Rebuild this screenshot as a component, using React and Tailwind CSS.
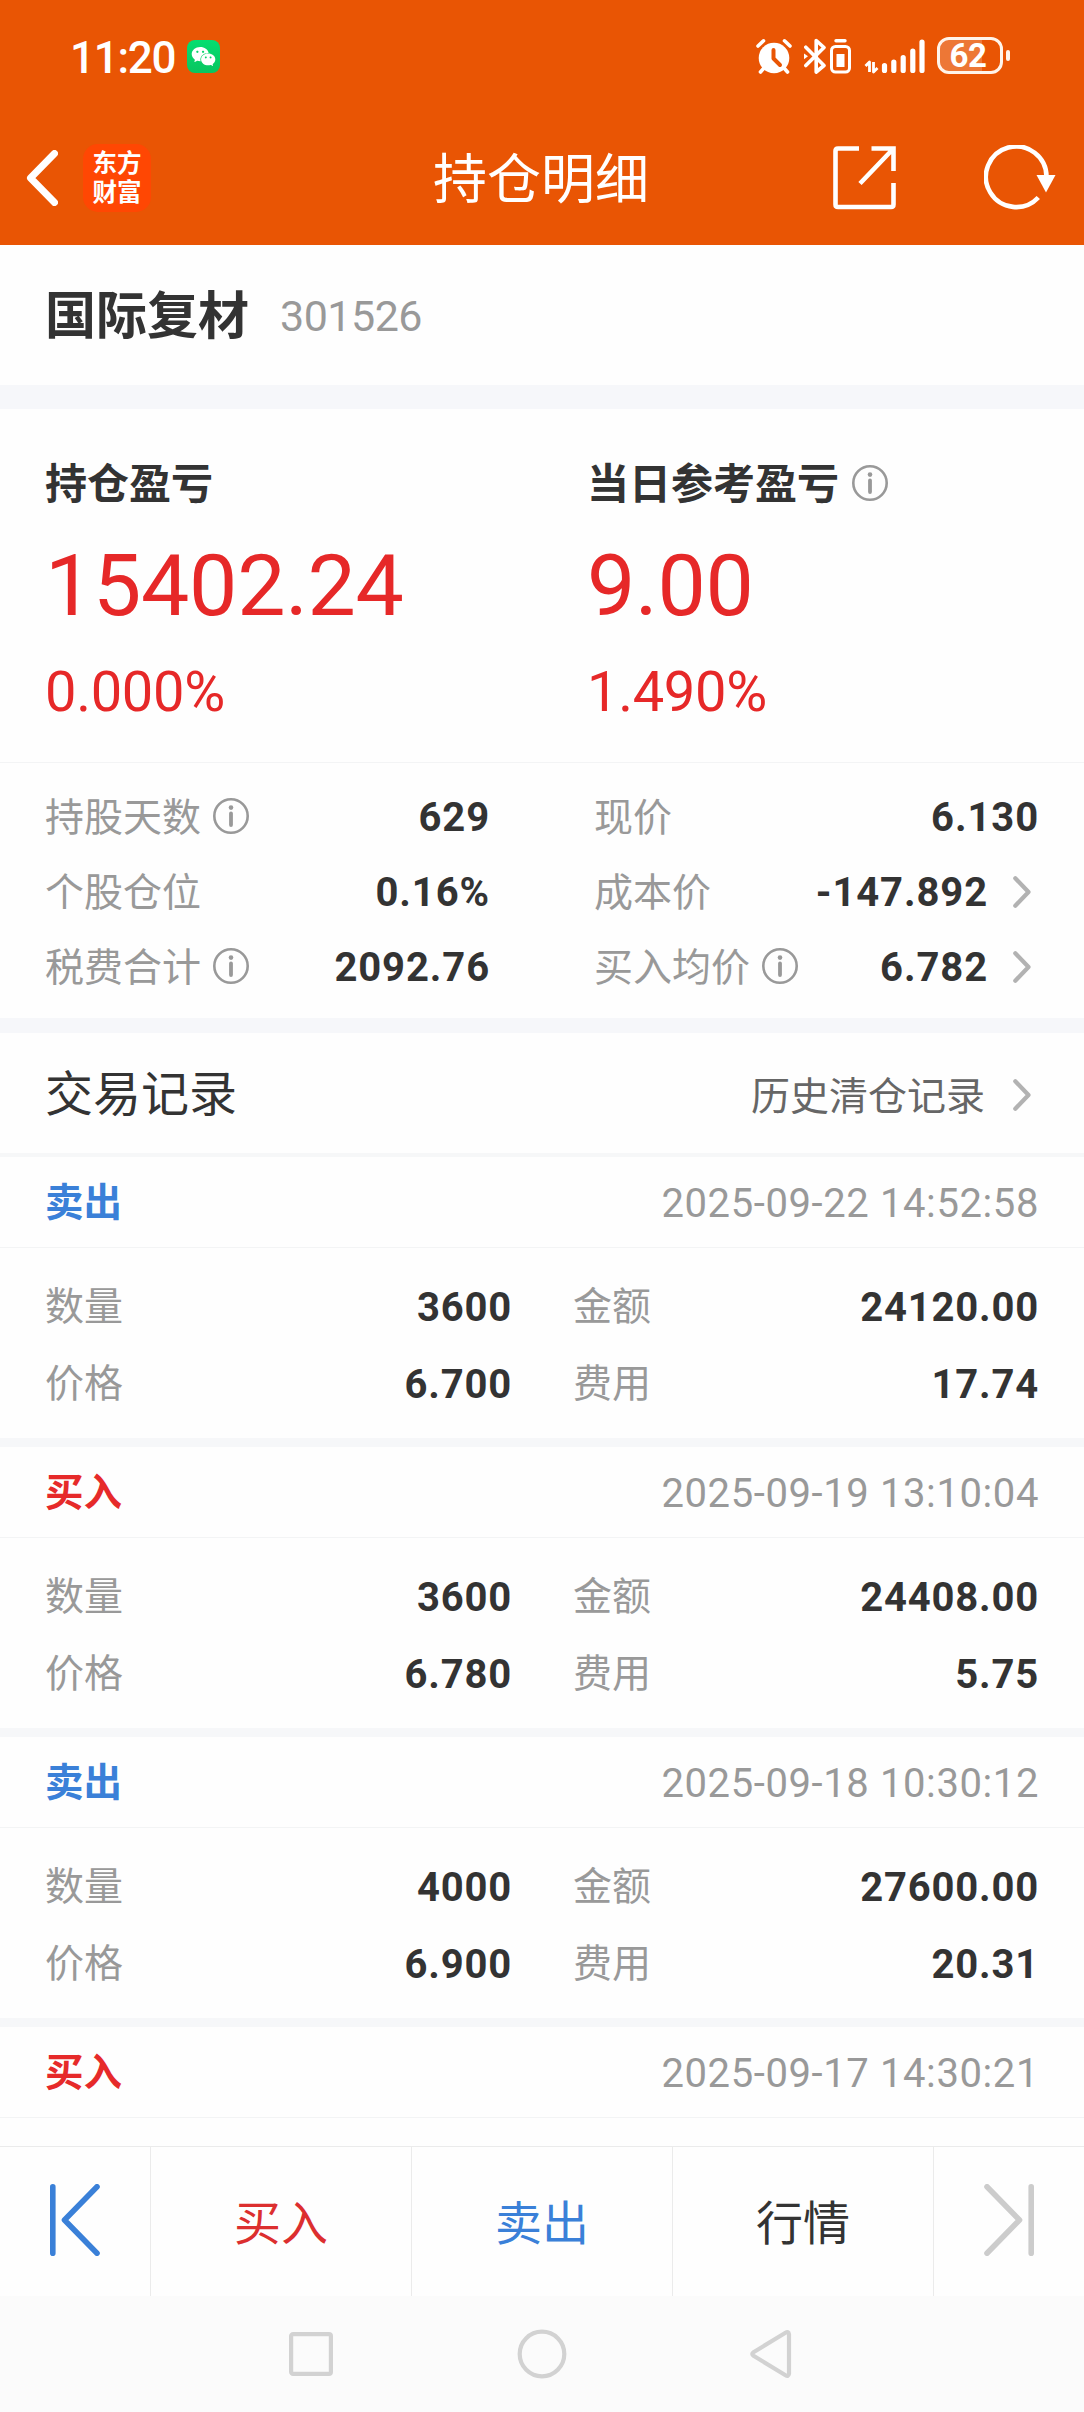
import { AiFillWechat } from 'react-icons/ai';

const records = [
   { type: 'sell', time: '2025-09-22 14:52:58', count: '3600', amount: '24120.00', price: '6.700', fee: '17.74' },
   { type: 'buy', time: '2025-09-19 13:10:04', count: '3600', amount: '24408.00', price: '6.780', fee: '5.75' },
   { type: 'sell', time: '2025-09-18 10:30:12', count: '4000', amount: '27600.00', price: '6.900', fee: '20.31' },
   { type: 'buy', time: '2025-09-17 14:30:21' },
];

function InfoIcon() {
   return (
      <svg width="36" height="36" viewBox="0 0 36 36" fill="none" className="shrink-0">
         <circle cx="18" cy="18" r="16.7" stroke="#999" strokeWidth="2.6" />
         <circle cx="18" cy="9.6" r="2.3" fill="#999" />
         <path d="M18 15.5V27" stroke="#999" strokeWidth="3.8" strokeLinecap="round" />
      </svg>
   );
}

function ArrowIcon() {
   return (
      <svg width="18" height="32" viewBox="0 0 18 32" fill="none" className="shrink-0">
         <path d="M2.3 2.3L15.5 16L2.3 29.7" stroke="#b2b2b2" strokeWidth="4.2" strokeLinecap="round" strokeLinejoin="round" />
      </svg>
   );
}

function StatusBar() {
   return (
      <div className="flex h-[112px] items-center pl-[70px] pr-[74px]">
         <span className="pt-[3px] text-[44px] font-medium leading-none tracking-[-1.3px]">11:20</span>
         <span className="ml-3 flex h-[33px] w-[33px] items-center justify-center rounded-[8px] bg-gradient-to-b from-[#05de71] to-[#09c55f]">
            <AiFillWechat size={27} />
         </span>

         <div className="ml-auto flex items-center">
            <svg width="36" height="36" viewBox="0 0 36 36" fill="none">
               <circle cx="18" cy="20" r="15.3" fill="#fff" />
               <path d="M2 8L7.5 2.8M34 8L28.5 2.8M4.5 34L8 30M31.5 34L28 30" stroke="#fff" strokeWidth="3.6" strokeLinecap="round" />
               <path d="M17.5 12V20.5L24 27" stroke="#e95504" strokeWidth="4" strokeLinecap="round" strokeLinejoin="round" />
            </svg>
            <svg width="22" height="36" viewBox="0 0 22 36" fill="none" className="ml-3">
               <path d="M1.8 9.2L20 27.5L12.2 34V2.5L20 9.5L1.8 27.5" stroke="#fff" strokeWidth="3.6" strokeLinecap="round" strokeLinejoin="round" />
               <path d="M0 15.5L4 18.3L0 21.3Z" fill="#fff" />
            </svg>
            <svg width="21" height="36" viewBox="0 0 21 36" fill="none" className="ml-1">
               <path d="M6 2.8H15" stroke="#fff" strokeWidth="3.4" strokeLinecap="round" />
               <rect x="1.5" y="8.5" width="18" height="25.5" rx="4" stroke="#fff" strokeWidth="3" />
               <rect x="6.5" y="16" width="8" height="13" fill="#fff" />
            </svg>
            <svg width="62" height="36" viewBox="0 0 62 36" fill="none" className="ml-[13px]">
               <path d="M1.5 28L5.5 24V34M9.5 24V34L13.5 30" stroke="#fff" strokeWidth="2.8" strokeLinejoin="round" />
               <path d="M20.5 27.5V32.5M29.8 24V32.5M39.2 19.5V32.5M48.8 13V32.5M58 4V32.5" stroke="#fff" strokeWidth="5.2" strokeLinecap="round" />
            </svg>
            <div className="relative ml-[11px] mb-px flex h-[37px] w-[66px] items-center justify-center overflow-hidden rounded-[12px] border-[3px] border-[#fff4ea]">
               <span className="absolute inset-y-0 left-0 w-[42px] bg-white/20" />
               <span className="relative pr-1 text-[33px] font-bold leading-none tracking-[-0.5px]">62</span>
            </div>
            <span className="ml-[3px] mb-px h-[11px] w-[4px] rounded-full bg-[#fff4ea]" />
         </div>
      </div>
   );
}

function TitleBar() {
   return (
      <div className="grid h-[133px] grid-cols-[1fr_auto_1fr] items-center pb-px pl-[26px] pr-[28px]">
         <div className="flex items-center">
            <svg width="32" height="56" viewBox="0 0 32 56" fill="none">
               <path d="M28.5 3.5L4.5 28L28.5 52.5" stroke="#fff" strokeWidth="7" strokeLinecap="round" strokeLinejoin="round" />
            </svg>
            <div className="ml-[25px] flex h-[68px] w-[68px] flex-col items-center justify-center rounded-[15px] bg-[#ff4703] text-[24.5px] font-bold leading-[29px]">
               <span>东方</span>
               <span>财富</span>
            </div>
         </div>
         <h1 className="pt-[5px] text-[54px] leading-none">持仓明细</h1>
         <div className="flex items-center justify-end">
            <svg width="64" height="64" viewBox="0 0 64 64" fill="none" stroke="#fff" strokeWidth="4.6">
               <path d="M26 2.5H5Q2.5 2.5 2.5 5V58.5Q2.5 61 5 61H58Q60.5 61 60.5 58.5V37" />
               <path d="M38.5 2.5H60.5V25M60.5 2.5L27 37.5" />
            </svg>
            <svg width="72" height="66" viewBox="0 0 72 66" fill="none" className="ml-[87px]">
               <path d="M54.3 52.5A30.3 30.3 0 1 1 62.5 32" stroke="#fff" strokeWidth="4.6" />
               <path d="M52.5 30H71.5L62 47.5Z" fill="#fff" />
            </svg>
         </div>
      </div>
   );
}

function Profit({ title, info, value, percent }) {
   return (
      <div className="flex w-[542px] shrink-0 flex-col items-start">
         <div className="flex h-[42px] items-center gap-[13px]">
            <span className="text-[42px] font-bold leading-none text-[#333]">{title}</span>
            {info && <span className="mb-[4px]"><InfoIcon /></span>}
         </div>
         <span className="mt-[37px] text-[86px] leading-[86px] tracking-[-0.3px]">{value}</span>
         <span className="mt-[35px] text-[56px] leading-[56px] tracking-[-0.3px]">{percent}</span>
      </div>
   );
}

function Stat({ label, info, value, arrow }) {
   return (
      <div className="flex h-[75px] items-center pt-[3px]">
         <span className="text-[39px] leading-none text-[#999]">{label}</span>
         {info && <span className="mb-[5px] ml-[12px]"><InfoIcon /></span>}
         <span className="ml-auto text-[40px] font-bold leading-none tracking-[0.9px]">{value}</span>
         {arrow && <span className="mb-[3px] ml-[25px] mr-[8px]"><ArrowIcon /></span>}
      </div>
   );
}

function Field({ label, value }) {
   return (
      <div className="flex h-[77px] items-center justify-between">
         <span className="text-[39px] leading-none text-[#999]">{label}</span>
         <span className="text-[40px] font-bold leading-none tracking-[0.8px]">{value}</span>
      </div>
   );
}

function TradeRecord({ record }) {
   const sell = record.type === 'sell';

   return (
      <div>
         <div className="flex h-[91px] items-center justify-between border-b border-[#f3f4f5] px-[45px] pt-[3px]">
            <span className={sell ? 'text-[38.5px] font-bold leading-none text-[#3a80d8]' : 'text-[38.5px] font-bold leading-none text-[#e62a2a]'}>
               {sell ? '卖出' : '买入'}
            </span>
            <span className="text-[40px] leading-none tracking-[0.6px] text-[#999]">{record.time}</span>
         </div>
         {record.count && (
            <div className="grid h-[199px] grid-cols-[467px_466px] content-start justify-between border-b-[9px] border-[#f6f7f9] pl-[45px] pr-[45px] pt-[21px]">
               <Field label="数量" value={record.count} />
               <Field label="金额" value={record.amount} />
               <Field label="价格" value={record.price} />
               <Field label="费用" value={record.fee} />
            </div>
         )}
      </div>
   );
}

function EdgeIcon({ color, flip }) {
   return (
      <svg width="50" height="72" viewBox="0 0 50 72" fill="none" stroke={color} strokeWidth="5.6" strokeLinecap="round" strokeLinejoin="round" className={flip ? 'mb-[3px] rotate-180' : 'mb-[3px]'}>
         <path d="M2.8 2.8V69.2M47 2.8L14.5 36L47 69.2" />
      </svg>
   );
}

export default function App() {
   return (
      <div className="flex h-[2412px] w-[1084px] flex-col overflow-hidden bg-[#fefefe] font-[Roboto,'Noto_Sans_CJK_SC',sans-serif] text-[#333]">
         <header className="h-[245px] shrink-0 bg-[#e95504] text-white">
            <StatusBar />
            <TitleBar />
         </header>

         <main className="min-h-0 flex-1 overflow-hidden">
            <div className="flex h-[164px] items-center border-b-[24px] border-[#f6f7fa] px-[45px] pt-[3px]">
               <span className="text-[51px] font-bold leading-none">国际复材</span>
               <span className="ml-[31px] text-[43px] leading-none tracking-[-0.5px] text-[#999]">301526</span>
            </div>

            <section className="flex h-[354px] border-b border-[#f3f4f5] pl-[45px] pt-[55px] text-[#e62828]">
               <Profit title="持仓盈亏" value="15402.24" percent="0.000%" />
               <Profit title="当日参考盈亏" info value="9.00" percent="1.490%" />
            </section>

            <section className="flex h-[270px] justify-between border-b-[15px] border-[#f6f7fa] px-[45px] pt-[16px]">
               <div className="w-[445px]">
                  <Stat label="持股天数" info value="629" />
                  <Stat label="个股仓位" value="0.16%" />
                  <Stat label="税费合计" info value="2092.76" />
               </div>
               <div className="w-[445px]">
                  <Stat label="现价" value="6.130" />
                  <Stat label="成本价" value="-147.892" arrow />
                  <Stat label="买入均价" info value="6.782" arrow />
               </div>
            </section>

            <section>
               <div className="flex h-[124px] items-center border-b-4 border-[#f6f7f8] px-[45px] pt-[3px]">
                  <h2 className="text-[48px] leading-none">交易记录</h2>
                  <span className="ml-auto mt-[5px] text-[39px] leading-none text-[#666]">历史清仓记录</span>
                  <span className="ml-[28px] mr-[8px] mt-px"><ArrowIcon /></span>
               </div>
               {records.map((record) => (
                  <TradeRecord key={record.time} record={record} />
               ))}
            </section>
         </main>

         <footer className="shrink-0">
            <div className="grid h-[150px] grid-cols-[151px_261px_261px_261px_150px] divide-x divide-[#ebebeb] border-t border-[#ebebeb] text-[47px] leading-none">
               <button className="flex items-center justify-center"><EdgeIcon color="#3a80d8" /></button>
               <button className="pt-[3px] text-[#dc2f2f]">买入</button>
               <button className="pt-[3px] text-[#3a80d8]">卖出</button>
               <button className="pt-[3px]">行情</button>
               <button className="flex items-center justify-center"><EdgeIcon color="#ccc" flip /></button>
            </div>
            <div className="flex h-[116px] items-center justify-center gap-[181px] bg-[#fbfbfb]">
               <svg width="50" height="50" viewBox="0 0 50 50" fill="none" stroke="#d2d2d2" strokeWidth="4.2">
                  <rect x="5.1" y="5.1" width="39.8" height="39.8" rx="2" />
               </svg>
               <svg width="50" height="50" viewBox="0 0 50 50" fill="none" stroke="#d2d2d2" strokeWidth="4.2">
                  <circle cx="25" cy="25" r="22.3" />
               </svg>
               <svg width="50" height="50" viewBox="0 0 50 50" fill="none" stroke="#d2d2d2" strokeWidth="4.2" strokeLinejoin="round">
                  <path d="M41 5.2Q40.500 2 37.500 3.800L5.500 23.200Q3 25 5.500 26.800L37.500 46.200Q40.500 48 41 44.800Z" />
               </svg>
            </div>
         </footer>
      </div>
   );
}
